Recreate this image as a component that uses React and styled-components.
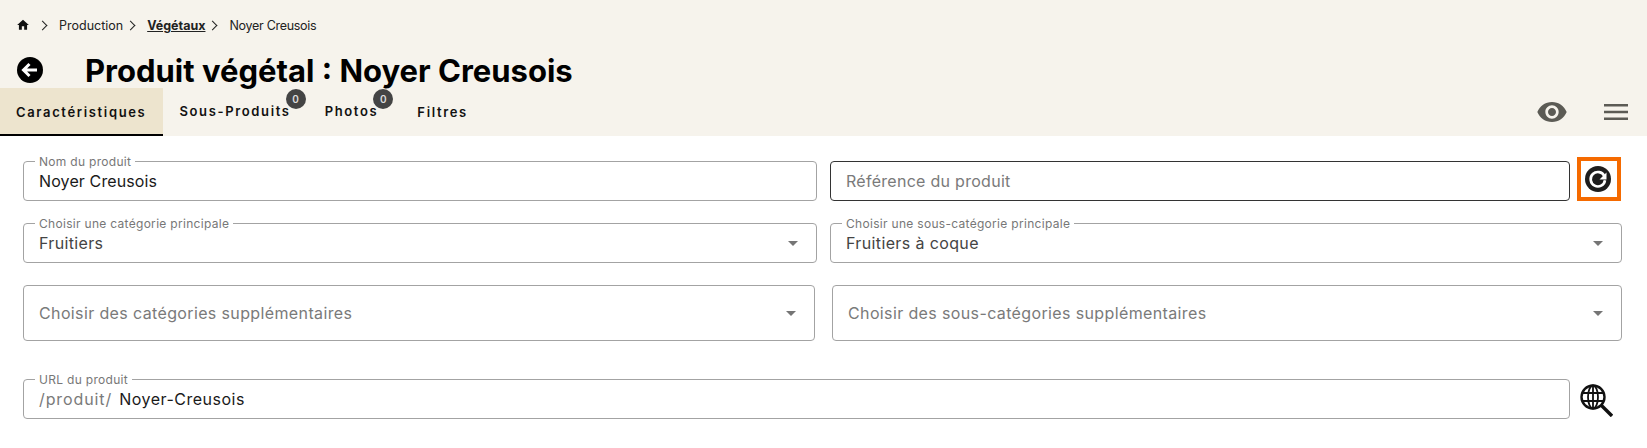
import React from "react"
import styled, { createGlobalStyle } from "styled-components"

const GlobalStyle = createGlobalStyle`
  body {
    margin: 0;
    background: #fff;
    font-family: "Inter", "Noto Sans", sans-serif;
  }
`

const App = () => {
  return (
    <>
      <GlobalStyle />
      <Header>
        <Breadcrumb>
          <HomeIcon viewBox="0 0 24 24">
            <path d="M10 20v-6h4v6h5v-8h3L12 3 2 12h3v8z" />
          </HomeIcon>
          <Chevron />
          <span>Production</span>
          <Chevron />
          <CrumbLink>Végétaux</CrumbLink>
          <Chevron />
          <CrumbCurrent>Noyer Creusois</CrumbCurrent>
        </Breadcrumb>
        <TitleRow>
          <BackIcon viewBox="0 0 26 26">
            <circle cx="13" cy="13" r="13" fill="#000" />
            <path d="M20 13H7M12.5 7 6.5 13l6 6" fill="none" stroke="#fff" strokeWidth="3" />
          </BackIcon>
          <Title>Produit végétal : Noyer Creusois</Title>
        </TitleRow>
        <TabBar>
          <Tab $active>Caractéristiques</Tab>
          <Tab $raised>
            Sous-Produits
            <Badge>0</Badge>
          </Tab>
          <Tab $raised>
            Photos
            <Badge>0</Badge>
          </Tab>
          <Tab $spaced>Filtres</Tab>
          <TabActions>
            <EyeIcon viewBox="0 0 24 24">
              <path d="M12 4.5C7 4.5 2.73 7.61 1 12c1.73 4.39 6 7.5 11 7.5s9.27-3.11 11-7.5c-1.73-4.39-6-7.5-11-7.5zM12 17c-2.76 0-5-2.24-5-5s2.24-5 5-5 5 2.24 5 5-2.24 5-5 5zm0-8c-1.66 0-3 1.34-3 3s1.34 3 3 3 3-1.34 3-3-1.34-3-3-3z" />
            </EyeIcon>
            <MenuIcon viewBox="0 0 24 18">
              <path d="M0 1h24v2.4H0zM0 7.8h24v2.4H0zM0 14.6h24V17H0z" />
            </MenuIcon>
          </TabActions>
        </TabBar>
      </Header>

      <Form>
        <Row>
          <Field label="Nom du produit" width={794}>
            <Value $spacing={0.12}>Noyer Creusois</Value>
          </Field>
          <Field width={740} focused gap={13}>
            <Placeholder $spacing={0.28}>Référence du produit</Placeholder>
          </Field>
          <RefreshButton>
            <svg viewBox="0 0 26 26" width="26" height="26">
              <circle cx="13" cy="13" r="13" fill="#1d1d1d" />
              <path d="M19.4 10.2A7.2 7.2 0 1 0 20 14.2" fill="none" stroke="#fff" strokeWidth="2.6" />
              <path d="M21.5 6.5v7h-7z" fill="#fff" />
            </svg>
          </RefreshButton>
        </Row>
        <Row $top={18}>
          <Field label="Choisir une catégorie principale" width={794} select>
            <Value $soft $spacing={0.35}>Fruitiers</Value>
          </Field>
          <Field label="Choisir une sous-catégorie principale" width={792} gap={13} select>
            <Value $soft $spacing={0.37}>Fruitiers à coque</Value>
          </Field>
        </Row>
        <Row $top={22}>
          <Field width={792} select tall>
            <Placeholder $spacing={0.37}>Choisir des catégories supplémentaires</Placeholder>
          </Field>
          <Field width={790} gap={17} select tall>
            <Placeholder $spacing={0.37}>Choisir des sous-catégories supplémentaires</Placeholder>
          </Field>
        </Row>
        <Row $top={34}>
          <Field label="URL du produit" width={1547}>
            <Placeholder $spacing={0.9} $prefix>/produit/</Placeholder>
            <Value $spacing={0.5}>Noyer-Creusois</Value>
          </Field>
          <GlobeIcon viewBox="0 0 33 33">
            <circle cx="13" cy="13" r="11.5" fill="none" stroke="#111" strokeWidth="2.4" />
            <ellipse cx="13" cy="13" rx="5" ry="11.5" fill="none" stroke="#111" strokeWidth="1.8" />
            <path d="M13 1.5v23M3 9h20M3 17h20" fill="none" stroke="#111" strokeWidth="1.8" />
            <path d="M21.5 21.5 32 32" fill="none" stroke="#111" strokeWidth="3.4" />
          </GlobeIcon>
        </Row>
      </Form>
    </>
  )
}

const Field = ({ label, children, width, gap, focused, select, tall }) => (
  <Outline $width={width} $gap={gap} $focused={focused} $height={label ? 44 : tall ? 56 : 40}>
    {label && <Legend>{label}</Legend>}
    <FieldBody $labelled={!!label}>
      {children}
      {select && <Caret />}
    </FieldBody>
  </Outline>
)

const Header = styled.header`
  background: #f6f3ec;
  height: 136px;
  display: flex;
  flex-direction: column;
`

const Breadcrumb = styled.nav`
  display: flex;
  align-items: center;
  height: 16px;
  margin-top: 17px;
  padding-left: 16px;
  font-size: 12.5px;
  color: #222;
`

const HomeIcon = styled.svg`
  width: 14px;
  height: 14px;
  margin-right: 5px;
  fill: #111;
`

const Chevron = styled.i`
  width: 6px;
  height: 6px;
  margin: 0 13.5px 0 3.5px;
  border-top: 1.7px solid #222;
  border-right: 1.7px solid #222;
  transform: rotate(45deg);
`

const CrumbLink = styled.span`
  font-weight: 700;
  text-decoration: underline;
`

const CrumbCurrent = styled.span`
  letter-spacing: -0.3px;
`

const TitleRow = styled.div`
  display: flex;
  align-items: center;
  height: 36px;
  margin-top: 19px;
  padding-left: 17px;
`

const BackIcon = styled.svg`
  width: 26px;
  height: 26px;
  margin-right: 42px;
`

const Title = styled.h1`
  margin: 0;
  font-size: 31px;
  font-weight: 700;
  color: #000;
`

const TabBar = styled.div`
  display: flex;
  height: 48px;
`

const Tab = styled.div`
  position: relative;
  display: flex;
  align-items: center;
  box-sizing: border-box;
  margin-left: ${(p) => (p.$spaced ? "5px" : "0")};
  padding: 2px ${(p) => (p.$raised ? "18px" : p.$active ? "17px" : "16px")} ${(p) => (p.$raised ? "3px" : "0")} 16px;
  font-size: 13px;
  font-weight: 600;
  letter-spacing: 1.65px;
  color: #111;
  background: ${(p) => (p.$active ? "#ede4ce" : "transparent")};
  border-bottom: 2px solid ${(p) => (p.$active ? "#000" : "transparent")};
`

const Badge = styled.span`
  position: absolute;
  top: 1px;
  right: 3px;
  width: 20px;
  height: 20px;
  border-radius: 50%;
  background: #444;
  color: #ddd;
  font-size: 10px;
  letter-spacing: 0;
  display: flex;
  align-items: center;
  justify-content: center;
`

const TabActions = styled.div`
  margin-left: auto;
  display: flex;
  align-items: center;
  gap: 36px;
  padding-right: 19px;
`

const EyeIcon = styled.svg`
  width: 32px;
  height: 32px;
  fill: #5c5b55;
`

const MenuIcon = styled.svg`
  width: 24px;
  height: 18px;
  fill: #5c5b55;
`

const Form = styled.main`
  padding: 21px 0 0 23px;
  display: flex;
  flex-direction: column;
`

const Row = styled.div`
  display: flex;
  align-items: flex-end;
  margin-top: ${(p) => p.$top || 0}px;
`

const Outline = styled.fieldset`
  flex: none;
  width: ${(p) => p.$width}px;
  box-sizing: border-box;
  height: ${(p) => p.$height}px;
  margin: 0 0 0 ${(p) => p.$gap || 0}px;
  padding: 0 15px;
  border: 1px solid ${(p) => (p.$focused ? "#333" : "#a3a3a3")};
  border-radius: 4px;
`

const Legend = styled.legend`
  padding: 0 4px;
  margin-left: -4px;
  font-size: 12px;
  line-height: 9px;
  letter-spacing: 0.3px;
  color: #777;
`

const FieldBody = styled.div`
  display: flex;
  align-items: center;
  height: ${(p) => (p.$labelled ? "30px" : "100%")};
  font-size: 16px;
`

const Value = styled.span`
  color: ${(p) => (p.$soft ? "#444" : "#1a1a1a")};
  letter-spacing: ${(p) => p.$spacing}px;
`

const Placeholder = styled.span`
  color: #7a7a7a;
  letter-spacing: ${(p) => p.$spacing}px;
  margin-right: ${(p) => (p.$prefix ? "7px" : "0")};
`

const Caret = styled.i`
  margin-left: auto;
  margin-right: 3px;
  border-left: 5px solid transparent;
  border-right: 5px solid transparent;
  border-top: 5px solid #757575;
`

const RefreshButton = styled.button`
  flex: none;
  width: 44px;
  height: 44px;
  margin-left: 7px;
  padding: 0 2px 0 0;
  box-sizing: border-box;
  border: 4px solid #f56a00;
  background: #fff;
  display: flex;
  align-items: center;
  justify-content: center;
`

const GlobeIcon = styled.svg`
  flex: none;
  width: 33px;
  height: 33px;
  margin: 0 0 2px 10px;
`

export default App
